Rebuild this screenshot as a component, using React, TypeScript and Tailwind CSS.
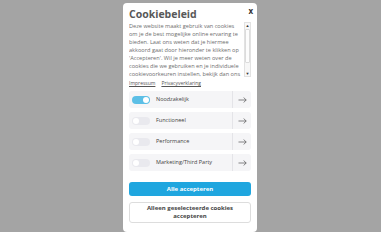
import React from "react";

const rows = [
  { label: "Noodzakelijk", on: true },
  { label: "Functioneel", on: false },
  { label: "Performance", on: false },
  { label: "Marketing/Third Party", on: false },
];

function Toggle({ on }: { on: boolean }) {
  return (
    <div
      className={
        on
          ? "w-[18px] h-[8px] rounded-full bg-[#5cbfe6] flex items-center justify-end px-[1px]"
          : "w-[18px] h-[8px] rounded-full bg-[#e9e9ee] flex items-center justify-start px-[1px]"
      }
    >
      <div className="w-[6px] h-[6px] rounded-full bg-white" />
    </div>
  );
}

export default function App() {
  return (
    <div
      className="w-[381px] h-[232px] bg-[#a4a4a4] overflow-hidden flex justify-center"
      style={{ fontFamily: '"Open Sans", "Noto Sans", sans-serif' }}
    >
      <div className="w-[134px] mt-[3px] ml-[-1px] bg-white rounded-[4px] px-[6px] pt-[3px] flex flex-col">
        <div className="flex items-start justify-between h-[16px]">
          <div className="text-[10.5px] leading-[16px] font-bold text-[#585858]">Cookiebeleid</div>
          <div className="text-[8px] leading-[10px] font-bold text-[#333333] mr-[-2px]">x</div>
        </div>
        <div className="flex h-[55px]">
          <div className="flex-1 overflow-y-auto [scrollbar-width:none] text-[5.6px] leading-[8px] text-[#6e6e6e]">
            Deze website maakt gebruik van cookies om je de best mogelijke online ervaring te bieden. Laat ons weten dat je hiermee akkoord gaat door hieronder te klikken op 'Accepteren'. Wil je meer weten over de cookies die we gebruiken en je individuele cookievoorkeuren instellen, bekijk dan ons cookiebeleid.
          </div>
          <div className="w-[7px] ml-[1px] flex flex-col items-center border border-[#e2e2e2] bg-[#f7f7f7]">
            <div className="text-[4px] leading-[5px] text-[#333]">▲</div>
            <div className="w-[5px] flex-1 bg-[#fdfdfd] border border-[#dcdcdc] rounded-[1px] mb-[8px] mt-[1px]" />
            <div className="text-[4px] leading-[5px] text-[#333]">▼</div>
          </div>
        </div>
        <div className="flex gap-[6px] mt-[2px] text-[5px] leading-[8px] text-[#555555]">
          <span className="underline">Impressum</span>
          <span className="underline">Privacyverklaring</span>
        </div>
        <div className="flex flex-col gap-[4px] mt-[4px]">
          {rows.map((r) => (
            <div key={r.label} className="h-[17px] rounded-[3px] bg-[#f5f5f7] flex items-center">
              <div className="flex-1 flex items-center pl-[3px] gap-[6px]">
                <Toggle on={r.on} />
                <span className="text-[5.5px] text-[#444444]">{r.label}</span>
              </div>
              <div className="w-[1px] h-full bg-[#e4e4e8]" />
              <div className="w-[18px] flex items-center justify-center text-[#555555]">
                <svg width="9" height="6" viewBox="0 0 9 6" fill="none" stroke="currentColor" strokeWidth="0.7">
                  <path d="M0.5 3H8.2M5.6 0.5L8.2 3L5.6 5.5" />
                </svg>
              </div>
            </div>
          ))}
        </div>
        <div className="mt-[11px] h-[16px] rounded-[3px] bg-[#1fa6df] flex items-center justify-center text-white text-[6px] font-bold">
          Alle accepteren
        </div>
        <div className="mt-[6px] h-[23px] rounded-[3px] border border-[#dddddd] bg-white flex items-center justify-center text-center text-[#444444] text-[6px] leading-[7.5px] font-bold px-[4px]">
          Alleen geselecteerde cookies accepteren
        </div>
        <div className="h-[10px]" />
      </div>
    </div>
  );
}
